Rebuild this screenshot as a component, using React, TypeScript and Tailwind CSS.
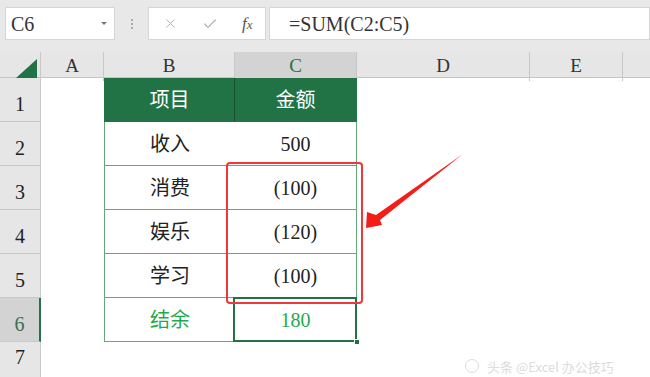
import React from 'react';
import { X, Check } from 'lucide-react';

const grid = 'grid grid-cols-[41px_63px_131px_122px_173px_93px_1fr]';

const rows = [
  { n: 1, b: '项目', c: '金额', kind: 'head' },
  { n: 2, b: '收入', c: '500', kind: 'body' },
  { n: 3, b: '消费', c: '100', kind: 'paren' },
  { n: 4, b: '娱乐', c: '120', kind: 'paren' },
  { n: 5, b: '学习', c: '100', kind: 'paren' },
  { n: 6, b: '结余', c: '180', kind: 'total' },
];

const Paren = ({ v }: { v: string }) => (
  <span className="inline-flex items-center">
    <span className="w-[10px] text-right">(</span>
    {v}
    <span className="w-[10px] text-left">)</span>
  </span>
);

const App = () => {
  return (
    <div className="relative w-[650px] h-[377px] overflow-hidden bg-white text-[#222]" style={{ fontFamily: '"Liberation Serif", "Noto Sans CJK SC", serif' }}>
      {/* formula bar */}
      <div className="h-[52px] bg-[#e8e8e8] flex items-start pt-[7px] pl-[5px]">
        <div className="w-[110px] h-[33px] bg-white border border-[#d6d6d6] flex items-center justify-between pl-[5px] pr-[7px]">
          <span className="text-[20px] leading-none text-[#333]">C6</span>
          <span className="w-0 h-0 border-l-[3px] border-r-[3px] border-t-[3px] border-l-transparent border-r-transparent border-t-[#777]" />
        </div>
        <div className="w-[33px] h-[33px] flex flex-col items-center justify-center gap-[2px]">
          <span className="w-[2px] h-[2px] bg-[#aaa]" />
          <span className="w-[2px] h-[2px] bg-[#aaa]" />
          <span className="w-[2px] h-[2px] bg-[#aaa]" />
        </div>
        <div className="w-[118px] h-[33px] bg-white border border-[#d6d6d6] grid grid-cols-3 items-center justify-items-center text-[#b0b0b0]">
          <X className="w-[15px] h-[15px] ml-[5px]" strokeWidth={1.5} />
          <Check className="w-[16px] h-[16px] ml-[6px]" strokeWidth={1.8} />
          <span className="italic text-[17px] text-[#555] leading-none ml-[3px]">
            f<span className="text-[13px]">x</span>
          </span>
        </div>
        <div className="flex-1 h-[33px] ml-[3px] bg-white border border-[#d6d6d6] flex items-center pl-[19px]">
          <span className="text-[20px] leading-none text-[#333]">=SUM(C2:C5)</span>
        </div>
      </div>

      {/* column headers */}
      <div className={`${grid} h-[26px] bg-[#e6e6e6] border-b border-[#c4c4c4] text-[19px] text-[#333]`}>
        <div className="border-r border-[#c8c8c8] flex items-end justify-end pr-[3px] pb-[3px]">
          <svg width="21" height="19" viewBox="0 0 21 19">
            <polygon points="21,0 21,19 0,19" fill="#217346" />
          </svg>
        </div>
        <div className="border-r border-[#c8c8c8] flex items-center justify-center">A</div>
        <div className="border-r border-[#c8c8c8] flex items-center justify-center">B</div>
        <div className="border-r border-[#c8c8c8] bg-[#d3d3d3] text-[#217346] flex items-center justify-center">C</div>
        <div className="border-r border-[#c8c8c8] flex items-center justify-center">D</div>
        <div className="border-r border-[#c8c8c8] flex items-center justify-center">E</div>
        <div />
      </div>

      {/* body rows */}
      {rows.map((r) => {
        const head = r.kind === 'head';
        const total = r.kind === 'total';
        return (
          <div key={r.n} className={`${grid} h-[44px] text-[20px]`}>
            <div
              className={`border-b border-[#c8c8c8] flex items-end justify-center pb-[2px] ${
                total ? 'bg-[#d3d3d3] border-r-2 border-r-[#217346] text-[#3c6e55]' : 'bg-[#e6e6e6] border-r border-r-[#c8c8c8] text-[#222]'
              }`}
            >
              {r.n}
            </div>
            <div />
            <div
              className={`flex items-center justify-center border-l border-b ${
                head ? 'bg-[#217346] text-white border-l-[#217346] border-b-[#217346] border-r border-r-[#174f30]' : 'border-[#63a67a]'
              } ${total ? 'text-[#1faa4d]' : ''}`}
            >
              {r.b}
            </div>
            <div
              className={`relative flex items-center justify-center border-r border-b ${
                head ? 'bg-[#217346] text-white border-[#217346]' : 'border-[#63a67a]'
              } ${total ? 'text-[#1faa4d]' : ''}`}
            >
              {r.kind === 'paren' ? <Paren v={r.c} /> : r.c}
              {total && (
                <>
                  <div className="absolute -left-[2px] -top-px -right-px -bottom-px border-2 border-[#217346]" />
                  <div className="absolute -right-[4px] -bottom-[4px] w-[6px] h-[6px] bg-[#217346] border border-white" />
                </>
              )}
            </div>
            <div />
            <div />
            <div />
          </div>
        );
      })}

      <div className={`${grid} h-[28px] text-[20px]`}>
        <div className="bg-[#e6e6e6] border-r border-b border-[#c8c8c8] flex items-end justify-center pb-[2px]">7</div>
      </div>
      <div className={`${grid} h-[20px]`}>
        <div className="bg-[#e6e6e6] border-r border-[#c8c8c8]" />
      </div>

      {/* annotation: red box + arrow */}
      <div className="absolute left-[226px] top-[162px] w-[137px] h-[142px] border-2 border-[#f03838] rounded-[4px]" />
      <svg className="absolute left-0 top-0 pointer-events-none" width="650" height="377">
        <polygon points="366,228 367,212 376,215 463,154 380,220 382,225" fill="#f41d17" />
      </svg>

      {/* faint watermark */}
      <div className="absolute left-[465px] top-[359px] flex items-center gap-[8px] text-[13px] leading-none text-[#dcdcdc]" style={{ fontFamily: '"Noto Sans CJK SC", sans-serif' }}>
        <span className="w-[14px] h-[14px] rounded-full border border-[#dcdcdc]" />
        <span>头条 @Excel 办公技巧</span>
      </div>
    </div>
  );
};

export default App;
